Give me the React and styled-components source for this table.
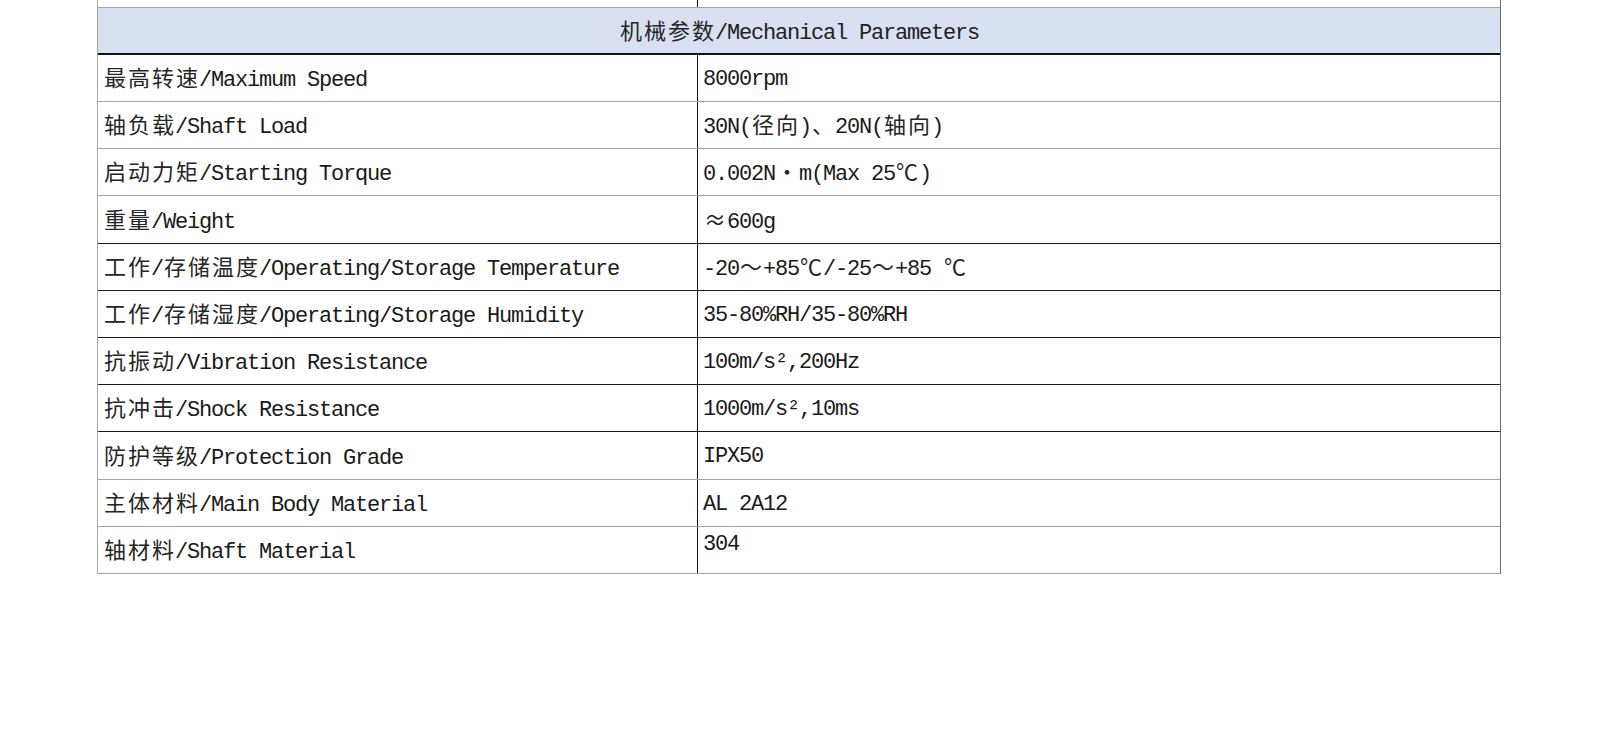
import React from "react";
import styled, { createGlobalStyle } from "styled-components";

const GlobalStyle = createGlobalStyle`
  html, body {
    margin: 0;
    padding: 0;
    background: #ffffff;
  }
  body {
    font-family: "Liberation Mono", "Noto Sans CJK SC", monospace;
    color: #1a1a1a;
  }
`;

const rows = [
  { label: "最高转速/Maximum Speed", value: "8000rpm", line: "light" },
  { label: "轴负载/Shaft Load", value: "30N(径向)、20N(轴向)", line: "light" },
  { label: "启动力矩/Starting Torque", value: "0.002N•m(Max 25℃)", line: "light" },
  { label: "重量/Weight", value: "≈600g", line: "dark", tall: true },
  {
    label: "工作/存储温度/Operating/Storage Temperature",
    value: "-20～+85℃/-25～+85 ℃",
    line: "dark",
  },
  {
    label: "工作/存储湿度/Operating/Storage Humidity",
    value: "35-80%RH/35-80%RH",
    line: "dark",
  },
  { label: "抗振动/Vibration Resistance", value: "100m/s²,200Hz", line: "dark" },
  { label: "抗冲击/Shock Resistance", value: "1000m/s²,10ms", line: "dark" },
  { label: "防护等级/Protection Grade", value: "IPX50", line: "light", tall: true },
  { label: "主体材料/Main Body Material", value: "AL 2A12", line: "light" },
  { label: "轴材料/Shaft Material", value: "304", line: "light", raised: true },
];

// full-width glyphs (CJK, ℃, ≈, ～, 、, •) take two columns like in SimSun
const WIDE = /[\u2022\u2103\u2248\u3000-\u303F\u4E00-\u9FFF\uFF01-\uFF60]/;

const MixedText = ({ text }) => {
  const parts = [];
  let run = "";
  text.split("").forEach((ch, i) => {
    if (WIDE.test(ch)) {
      if (run) parts.push(run);
      run = "";
      parts.push(<Wide key={i}>{ch}</Wide>);
    } else {
      run += ch;
    }
  });
  if (run) parts.push(run);
  return <Text>{parts}</Text>;
};

const App = () => {
  return (
    <>
      <GlobalStyle />
      <Page>
        <Table>
          {/* previous section, scrolled off the top */}
          <Row line="light">
            <Cell divider />
            <Cell />
          </Row>
          <HeaderRow>
            <MixedText text="机械参数/Mechanical Parameters" />
          </HeaderRow>
          {rows.map((r) => (
            <Row key={r.label} line={r.line} tall={r.tall}>
              <Cell divider>
                <MixedText text={r.label} />
              </Cell>
              <Cell raised={r.raised}>
                <MixedText text={r.value} />
              </Cell>
            </Row>
          ))}
        </Table>
      </Page>
    </>
  );
};

export default App;

const Page = styled.div`
  width: 100%;
  height: 737px;
  overflow: hidden;
  background: #ffffff;
`;

const Table = styled.div`
  width: 1404px;
  margin: -39px 0 0 97px;
  box-sizing: border-box;
  border-left: 1px solid #a9a9a9;
  border-right: 1px solid #707070;
  display: flex;
  flex-direction: column;
`;

const Row = styled.div`
  display: grid;
  grid-template-columns: 600px 1fr;
  height: ${(p) => (p.tall ? "48px" : "47px")};
  box-sizing: border-box;
  border-bottom: ${(p) =>
    p.line === "dark" ? "1px solid #1c1c1c" : "1px solid #a3a3a3"};
`;

const HeaderRow = styled.div`
  height: 47px;
  box-sizing: border-box;
  background: #d9e0f1;
  border-bottom: 2px solid #111111;
  display: flex;
  align-items: center;
  justify-content: center;
  font-size: 22px;
  letter-spacing: -1.2px;
  color: #222222;
  padding-top: 3px;
`;

const Cell = styled.div`
  display: flex;
  align-items: ${(p) => (p.raised ? "flex-start" : "center")};
  box-sizing: border-box;
  padding: ${(p) => (p.raised ? "5px 5px 0 5px" : "3px 5px 0 5px")};
  border-right: ${(p) => (p.divider ? "1px solid #111111" : "none")};
  font-size: 22px;
  letter-spacing: -1.2px;
  overflow: hidden;
  color: #1a1a1a;
`;

const Text = styled.span`
  display: block;
  white-space: pre;
  line-height: 26px;
`;

const Wide = styled.span`
  display: inline-block;
  width: 24px;
  text-align: center;
  vertical-align: 0;
  font-family: "Noto Sans CJK SC", sans-serif;
  font-size: 22px;
  line-height: 1;
  letter-spacing: 0;
  color: #262626;
`;
